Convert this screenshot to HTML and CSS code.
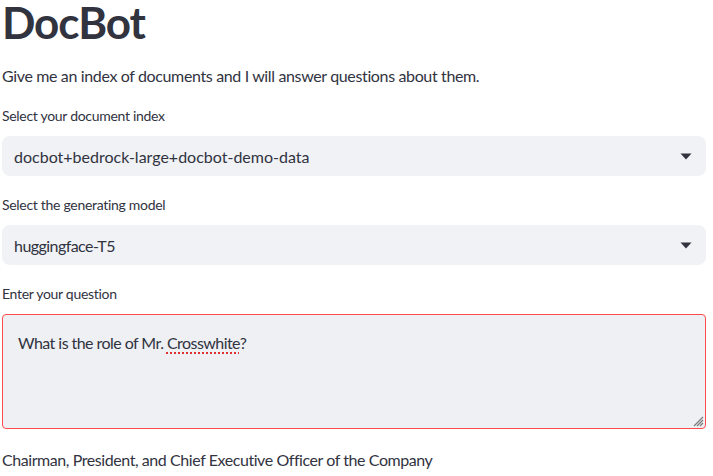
FILE: index.html
```html
<!DOCTYPE html>
<html lang="en">
<head>
<meta charset="utf-8">
<title>DocBot</title>
<link rel="stylesheet" href="styles.css">
</head>
<body>
<main class="app">
  <h1 class="title">DocBot</h1>
  <p class="intro">Give me an index of documents and I will answer questions about them.</p>

  <div class="field">
    <label class="label">Select your document index</label>
    <div class="select">
      <span class="select-value">docbot+bedrock-large+docbot-demo-data</span>
      <svg class="caret" width="12" height="7" viewBox="0 0 12 7"><path d="M0.5 0.5h11L6 6.5z" fill="#31333F"/></svg>
    </div>
  </div>

  <div class="field">
    <label class="label">Select the generating model</label>
    <div class="select">
      <span class="select-value narrow">huggingface-T5</span>
      <svg class="caret" width="12" height="7" viewBox="0 0 12 7"><path d="M0.5 0.5h11L6 6.5z" fill="#31333F"/></svg>
    </div>
  </div>

  <div class="field">
    <label class="label">Enter your question</label>
    <div class="textarea">
      <span>What is the role of Mr. <span class="misspelt">Crosswhite</span>?</span>
      <svg class="grip" width="11" height="11" viewBox="0 0 11 11">
        <path d="M10 1L1 10M10 4L4 10M10 7L7 10" stroke="#7a7a7a" stroke-width="1.2"/>
      </svg>
    </div>
  </div>

  <p class="answer">Chairman, President, and Chief Executive Officer of the Company</p>
</main>
</body>
</html>
```

FILE: styles.css
```css
* { box-sizing: border-box; }

html, body {
  margin: 0;
  padding: 0;
  background: #ffffff;
}

body {
  font-family: Lato, "Noto Sans", sans-serif;
  color: #31333F;
}

.app {
  display: flex;
  flex-direction: column;
  width: 704px;
  margin-left: 2px;
  padding-top: 2px;
}

.title {
  margin: 0;
  height: 42px;
  line-height: 40px;
  font-size: 44px;
  font-weight: 700;
  letter-spacing: -1.1px;
}

.intro {
  margin: 20px 0 0 0;
  height: 24px;
  line-height: 24px;
  font-size: 16px;
  letter-spacing: -0.36px;
}

.field {
  display: flex;
  flex-direction: column;
  margin-top: 18px;
}

.field + .field {
  margin-top: 19px;
}

.label {
  height: 20px;
  line-height: 20px;
  font-size: 14px;
  letter-spacing: -0.3px;
  margin-bottom: 10px;
}

.select {
  display: flex;
  align-items: center;
  justify-content: space-between;
  height: 40px;
  padding: 0 14px 0 12px;
  background: #F0F2F6;
  border-radius: 8px;
  font-size: 16px;
}

.select-value.narrow {
  letter-spacing: -0.55px;
}

.caret {
  display: block;
}

.textarea {
  position: relative;
  height: 115px;
  padding: 16px 15px;
  background: #EEF0F4;
  border: 1px solid #FF4B4B;
  border-radius: 4px;
  font-size: 16px;
  line-height: 24px;
  letter-spacing: -0.55px;
}

.misspelt {
  text-decoration: underline dotted #E0302F;
  text-decoration-thickness: 2px;
  text-underline-offset: 3px;
}

.grip {
  position: absolute;
  right: 1px;
  bottom: 1px;
}

.answer {
  margin: 19px 0 0 0;
  height: 24px;
  line-height: 24px;
  font-size: 16px;
  letter-spacing: -0.43px;
}
```
